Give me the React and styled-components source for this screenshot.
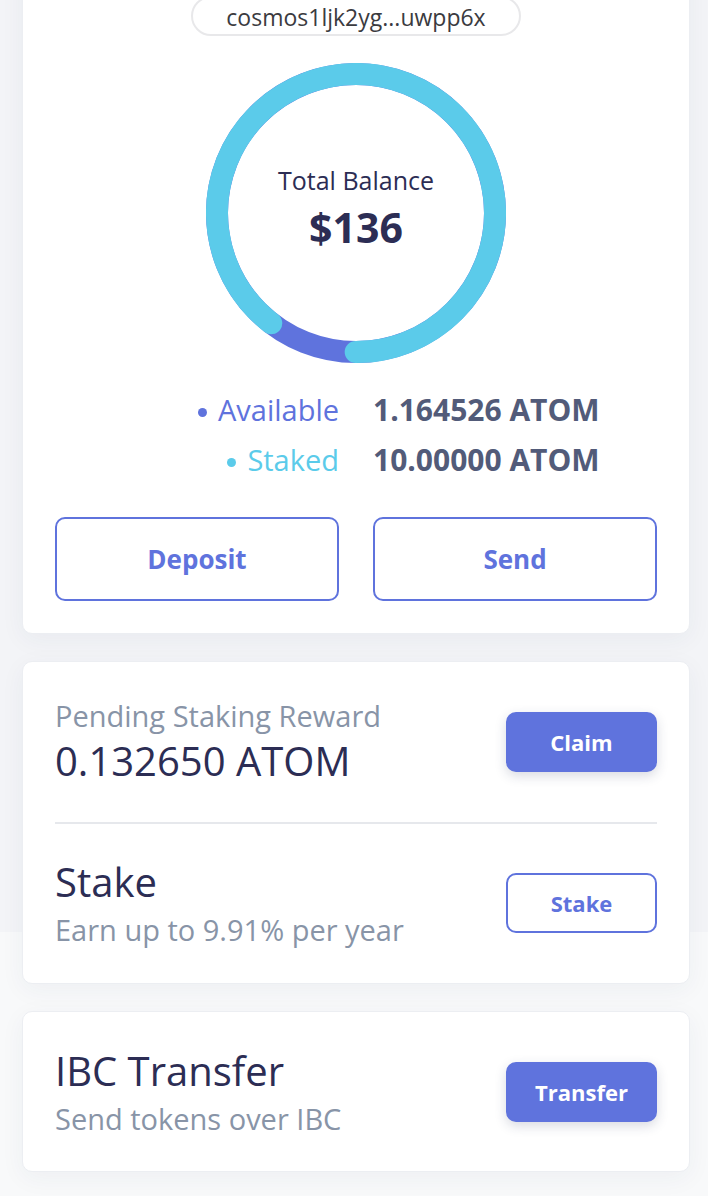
import React from "react";
import styled, { createGlobalStyle } from "styled-components";

const GlobalStyle = createGlobalStyle`
  * { box-sizing: border-box; }
  body {
    margin: 0;
    font-family: "Open Sans", "Noto Sans", sans-serif;
    background: linear-gradient(to bottom, #f3f4f7 0, #f3f4f7 932px, #f8f9fa 932px);
    overflow: hidden;
  }
`;

const Page = styled.div`
  padding: 0 18px 24px 22px;
  display: flex;
  flex-direction: column;
  gap: 27px;
`;

const Card = styled.div`
  background: #fff;
  border: 1px solid #eceef2;
  border-radius: 10px;
  box-shadow: 0 6px 24px rgba(40, 50, 90, 0.05);
  padding: ${(p) => p.$pad || "0 32px"};
  margin-top: ${(p) => p.$top || "0"};
`;

const BalanceCard = styled(Card)`
  display: flex;
  flex-direction: column;
  align-items: center;
`;

const AddressPill = styled.div`
  width: 330px;
  height: 40px;
  line-height: 38px;
  border: 2px solid #e8e8ea;
  border-radius: 20px;
  text-align: center;
  font-size: 23px;
  color: #3b3b3f;
`;

const Donut = styled.div`
  position: relative;
  width: 300px;
  height: 300px;
  margin-top: 27px;
`;

const DonutCenter = styled.div`
  position: absolute;
  inset: 0;
  display: flex;
  flex-direction: column;
  align-items: center;
  justify-content: center;
  color: #2c2d54;
  padding-bottom: 10px;
`;

const CenterLabel = styled.div`
  font-size: 25px;
  line-height: 30px;
`;

const CenterValue = styled.div`
  font-size: 41px;
  font-weight: 700;
  line-height: 48px;
  margin-top: 8px;
`;

const Legend = styled.div`
  width: 100%;
  display: grid;
  grid-template-columns: 1fr 1fr;
  column-gap: 34px;
  margin-top: 22px;
`;

const LegendLabel = styled.div`
  display: flex;
  align-items: center;
  justify-content: flex-end;
  gap: 11px;
  font-size: 29px;
  line-height: 50px;
  color: ${(p) => p.$color};

  &::before {
    content: "";
    width: 9px;
    height: 9px;
    border-radius: 50%;
    background: ${(p) => p.$color};
    margin-top: 4px;
  }
`;

const LegendValue = styled.div`
  font-size: 30px;
  line-height: 50px;
  font-weight: 700;
  color: #525b79;
`;

const ActionRow = styled.div`
  width: 100%;
  display: grid;
  grid-template-columns: 1fr 1fr;
  gap: 34px;
  margin-top: 32px;
`;

const Button = styled.button`
  font-family: inherit;
  font-weight: 700;
  border-radius: 10px;
  border: 2px solid #5f73dd;
  cursor: pointer;
  background: ${(p) => (p.$filled ? "#5f73dd" : "#fff")};
  color: ${(p) => (p.$filled ? "#fff" : "#5f73dd")};
  box-shadow: ${(p) => (p.$filled ? "0 4px 12px rgba(40, 50, 90, 0.18)" : "none")};
`;

const BigButton = styled(Button)`
  height: 84px;
  font-size: 26px;
`;

const SmallButton = styled(Button)`
  width: 151px;
  height: 60px;
  font-size: 22px;
  flex-shrink: 0;
`;

const Row = styled.div`
  display: flex;
  align-items: center;
  justify-content: space-between;
  padding: ${(p) => p.$pad || "35px 0"};
  & + & {
    border-top: 2px solid #e6e8ec;
  }
`;

const Info = styled.div`
  display: flex;
  flex-direction: column;
`;

const Muted = styled.div`
  font-size: 29px;
  line-height: 36px;
  color: #8894a7;
  margin-top: ${(p) => p.$gap || "0"};
`;

const Strong = styled.div`
  font-size: 40px;
  line-height: 48px;
  color: #2c2d54;
  margin-top: ${(p) => p.$gap || "0"};
`;

const available = 1.164526;
const staked = 10.0;

function BalanceRing() {
  const r = 139;
  const c = 2 * Math.PI * r;
  const share = staked / (available + staked);
  const start = 360 * (available / (available + staked)) + 180;
  return (
    <svg width="300" height="300" viewBox="0 0 300 300">
      <circle cx="150" cy="150" r={r} fill="none" stroke="#5f73dd" strokeWidth="22" />
      <circle
        cx="150"
        cy="150"
        r={r}
        fill="none"
        stroke="#5bcbea"
        strokeWidth="22"
        strokeLinecap="round"
        strokeDasharray={`${c * share} ${c}`}
        transform={`rotate(${start - 90} 150 150)`}
      />
    </svg>
  );
}

export default function App() {
  return (
    <>
      <GlobalStyle />
      <Page>
        <BalanceCard $top="-40px" $pad="35px 32px 32px">
          <AddressPill>cosmos1ljk2yg...uwpp6x</AddressPill>
          <Donut>
            <BalanceRing />
            <DonutCenter>
              <CenterLabel>Total Balance</CenterLabel>
              <CenterValue>$136</CenterValue>
            </DonutCenter>
          </Donut>
          <Legend>
            <LegendLabel $color="#5f73dd">Available</LegendLabel>
            <LegendValue>1.164526 ATOM</LegendValue>
            <LegendLabel $color="#5bcbea">Staked</LegendLabel>
            <LegendValue>10.00000 ATOM</LegendValue>
          </Legend>
          <ActionRow>
            <BigButton>Deposit</BigButton>
            <BigButton>Send</BigButton>
          </ActionRow>
        </BalanceCard>

        <Card>
          <Row $pad="36px 0 37px">
            <Info>
              <Muted>Pending Staking Reward</Muted>
              <Strong $gap="3px">0.132650 ATOM</Strong>
            </Info>
            <SmallButton $filled>Claim</SmallButton>
          </Row>
          <Row $pad="34px 0 35px">
            <Info>
              <Strong>Stake</Strong>
              <Muted $gap="6px">Earn up to 9.91% per year</Muted>
            </Info>
            <SmallButton>Stake</SmallButton>
          </Row>
        </Card>

        <Card>
          <Row $pad="35px 0 34px">
            <Info>
              <Strong>IBC Transfer</Strong>
              <Muted $gap="6px">Send tokens over IBC</Muted>
            </Info>
            <SmallButton $filled>Transfer</SmallButton>
          </Row>
        </Card>
      </Page>
    </>
  );
}
